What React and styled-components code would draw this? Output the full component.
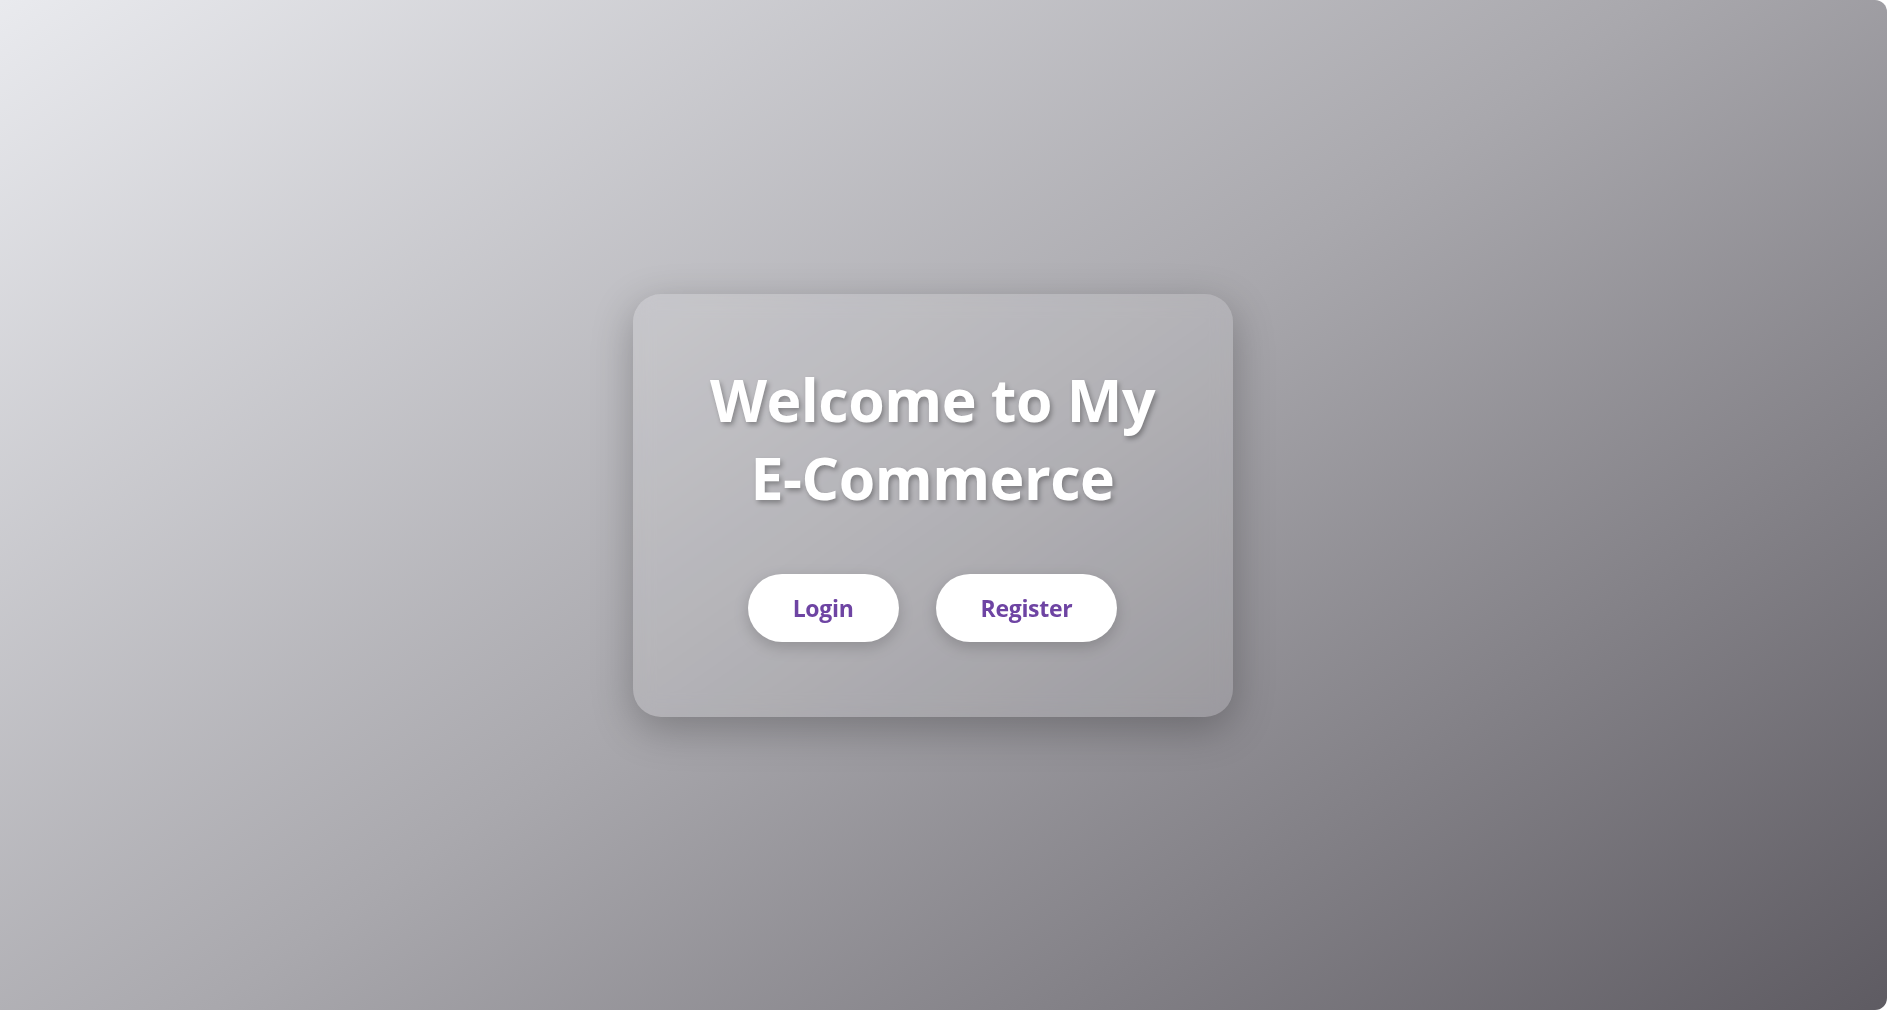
import React from "react";
import styled, { createGlobalStyle } from "styled-components";

const GlobalStyle = createGlobalStyle`
  html, body {
    margin: 0;
    padding: 0;
    background: #ffffff;
    overflow: hidden;
  }
  body {
    font-family: "Open Sans", "Noto Sans", "Liberation Sans", sans-serif;
  }
`;

const Page = styled.main`
  box-sizing: border-box;
  margin-left: -22px;
  width: calc(100% + 17px);
  height: 1010px;
  border-radius: 12px;
  background: linear-gradient(145deg, #eaebef 0%, #a9a8ad 50%, #5e5b62 100%);
  display: flex;
  align-items: center;
  justify-content: center;
`;

const Card = styled.section`
  box-sizing: border-box;
  width: 600px;
  height: 423px;
  padding: 66px 40px 0;
  border-radius: 28px;
  background: rgba(255, 255, 255, 0.12);
  backdrop-filter: blur(10px);
  box-shadow: 0 12px 40px rgba(0, 0, 0, 0.25);
  display: flex;
  flex-direction: column;
  align-items: center;
`;

const Title = styled.h1`
  margin: 0 0 58px;
  color: #ffffff;
  font-size: 59px;
  line-height: 78px;
  font-weight: 700;
  letter-spacing: -0.5px;
  text-align: center;
  text-shadow: 2px 3px 5px rgba(0, 0, 0, 0.3);
`;

const Actions = styled.div`
  display: flex;
  gap: 37px;
`;

const PillButton = styled.button`
  box-sizing: border-box;
  height: 68px;
  padding: 0 45px;
  border: none;
  border-radius: 34px;
  background: #ffffff;
  color: #6e44a3;
  font-family: "Open Sans", "Noto Sans", sans-serif;
  font-size: 23px;
  font-weight: 700;
  letter-spacing: -0.3px;
  cursor: pointer;
  box-shadow: 0 5px 15px rgba(0, 0, 0, 0.18);
`;

export default function App() {
  return (
    <>
      <GlobalStyle />
      <Page>
        <Card>
          <Title>
            Welcome to My
            <br />
            E-Commerce
          </Title>
          <Actions>
            <PillButton>Login</PillButton>
            <PillButton>Register</PillButton>
          </Actions>
        </Card>
      </Page>
    </>
  );
}
